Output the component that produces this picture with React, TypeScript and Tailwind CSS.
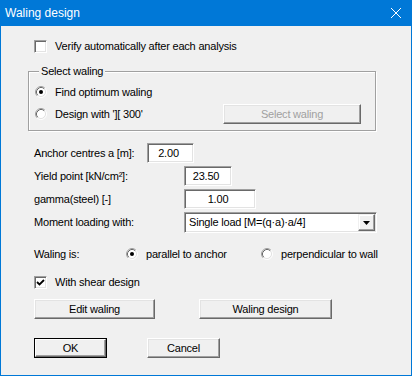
import React from 'react';

function Radio({ checked }: { checked?: boolean }) {
  return (
    <svg width="12" height="12" viewBox="0 0 12 12" className="shrink-0">
      <circle cx="6" cy="6" r="4.5" fill="#fff" />
      <path d="M2.11 9.89 A5.5 5.5 0 0 1 9.89 2.11" fill="none" stroke="#a0a0a0" />
      <path d="M9.89 2.11 A5.5 5.5 0 0 1 2.11 9.89" fill="none" stroke="#fff" />
      <path d="M2.82 9.18 A4.5 4.5 0 0 1 9.18 2.82" fill="none" stroke="#696969" />
      <path d="M9.18 2.82 A4.5 4.5 0 0 1 2.82 9.18" fill="none" stroke="#e3e3e3" />
      {checked && <circle cx="6" cy="6" r="2" fill="#000" />}
    </svg>
  );
}

function Checkbox({ checked }: { checked?: boolean }) {
  return (
    <div className="w-[13px] h-[13px] shrink-0 bg-white border border-t-[#a0a0a0] border-l-[#a0a0a0] border-b-white border-r-white shadow-[inset_1px_1px_0_#696969,inset_-1px_-1px_0_#e3e3e3] flex items-center justify-center">
      {checked && (
        <svg width="9" height="9" viewBox="0 0 9 9">
          <path d="M1 4 L3.5 6.5 L8 2" fill="none" stroke="#000" strokeWidth="1.8" />
        </svg>
      )}
    </div>
  );
}

interface ButtonProps {
  children: React.ReactNode;
  className?: string;
  disabled?: boolean;
}

function Button({ children, className = '', disabled }: ButtonProps) {
  return (
    <div
      className={`h-[20px] flex items-center justify-center bg-[#f0f0f0] border border-t-white border-l-white border-b-[#696969] border-r-[#696969] shadow-[inset_-1px_-1px_0_#a0a0a0,inset_1px_1px_0_#e3e3e3] ${
        disabled ? 'text-[#a0a0a0]' : 'text-black'
      } ${className}`}
    >
      {children}
    </div>
  );
}

function DefaultButton({ children, className = '' }: ButtonProps) {
  return (
    <div className={`h-[20px] border border-black flex ${className}`}>
      <div className="flex-1 flex items-center justify-center bg-[#f0f0f0] border border-t-white border-l-white border-b-[#696969] border-r-[#696969] shadow-[inset_-1px_-1px_0_#a0a0a0]">
        {children}
      </div>
    </div>
  );
}

function Field({ value, className = '' }: { value: string; className?: string }) {
  return (
    <div className={`h-[20px] bg-white flex items-center justify-center pr-[4px] border border-t-[#a0a0a0] border-l-[#a0a0a0] border-b-white border-r-white shadow-[inset_1px_1px_0_#696969,inset_-1px_-1px_0_#e3e3e3] ${className}`}>
      {value}
    </div>
  );
}

export default function App() {
  return (
    <div className="w-[412px] h-[376px] bg-[#0078d7] px-[1px] pb-[1px] flex flex-col font-['Liberation_Sans',Arial,sans-serif] text-[11px] tracking-[-0.2px] text-black">
      <div className="h-[26px] shrink-0 flex items-center justify-between pl-[4px] pr-[10px] text-white text-[12px] tracking-normal">
        <span>Waling design</span>
        <svg width="10" height="10" viewBox="0 0 10 10">
          <path d="M0 0 L10 10 M10 0 L0 10" stroke="#fff" strokeWidth="1" />
        </svg>
      </div>

      <div className="flex-1 bg-[#f0f0f0] pl-[27px] flex flex-col">
        <div className="mt-[14px] h-[13px] pl-[6px] flex items-center gap-[8px]">
          <Checkbox />
          <span>Verify automatically after each analysis</span>
        </div>

        <div className="relative mt-[18px] w-[348px] h-[60px] border border-[#a0a0a0] shadow-[inset_1px_1px_0_#fff,1px_1px_0_#fff] pt-[10px] pl-[6px] pr-[14px] flex flex-col">
          <span className="absolute left-[10px] top-[-7px] h-[13px] leading-[13px] px-[2px] bg-[#f0f0f0]">Select waling</span>
          <div className="h-[20px] flex items-center gap-[8px]">
            <Radio checked />
            <span>Find optimum waling</span>
          </div>
          <div className="mt-[2px] h-[20px] flex items-center justify-between">
            <div className="flex items-center gap-[8px]">
              <Radio />
              <span>Design with '][ 300'</span>
            </div>
            <Button disabled className="w-[138px]">Select waling</Button>
          </div>
        </div>

        <div className="mt-[12px] h-[20px] pl-[6px] flex items-center">
          <span className="w-[113px]">Anchor centres a [m]:</span>
          <Field value="2.00" className="w-[47px]" />
        </div>
        <div className="mt-[3px] h-[20px] pl-[6px] flex items-center">
          <span className="w-[150px]">Yield point [kN/cm²]:</span>
          <Field value="23.50" className="w-[48px]" />
        </div>
        <div className="mt-[3px] h-[20px] pl-[6px] flex items-center">
          <span className="w-[150px]">gamma(steel) [-]</span>
          <Field value="1.00" className="w-[72px]" />
        </div>
        <div className="mt-[3px] h-[21px] pl-[6px] flex items-center">
          <span className="w-[150px]">Moment loading with:</span>
          <div className="w-[193px] h-[21px] bg-white flex items-center border border-t-[#a0a0a0] border-l-[#a0a0a0] border-b-white border-r-white shadow-[inset_1px_1px_0_#696969,inset_-1px_-1px_0_#e3e3e3] p-[1px]">
            <span className="flex-1 pl-[3px]">Single load [M=(q·a)·a/4]</span>
            <div className="w-[17px] h-full flex items-center justify-center bg-[#f0f0f0] border border-t-[#f0f0f0] border-l-[#f0f0f0] border-b-[#696969] border-r-[#696969] shadow-[inset_-1px_-1px_0_#a0a0a0,inset_1px_1px_0_#fff]">
              <svg width="7" height="4" viewBox="0 0 7 4">
                <path d="M0 0 H7 L3.5 4 Z" fill="#000" />
              </svg>
            </div>
          </div>
        </div>

        <div className="mt-[11px] h-[20px] pl-[6px] flex items-center">
          <span className="w-[92px]">Waling is:</span>
          <div className="w-[135px] flex items-center gap-[8px]">
            <Radio checked />
            <span>parallel to anchor</span>
          </div>
          <div className="flex items-center gap-[8px]">
            <Radio />
            <span>perpendicular to wall</span>
          </div>
        </div>

        <div className="mt-[12px] h-[13px] pl-[6px] flex items-center gap-[8px]">
          <Checkbox checked />
          <span>With shear design</span>
        </div>

        <div className="mt-[10px] pl-[6px] flex gap-[44px]">
          <Button className="w-[121px]">Edit waling</Button>
          <Button className="w-[133px]">Waling design</Button>
        </div>

        <div className="mt-[19px] pl-[6px] flex gap-[40px]">
          <DefaultButton className="w-[73px]">OK</DefaultButton>
          <Button className="w-[73px]">Cancel</Button>
        </div>
      </div>
    </div>
  );
}
